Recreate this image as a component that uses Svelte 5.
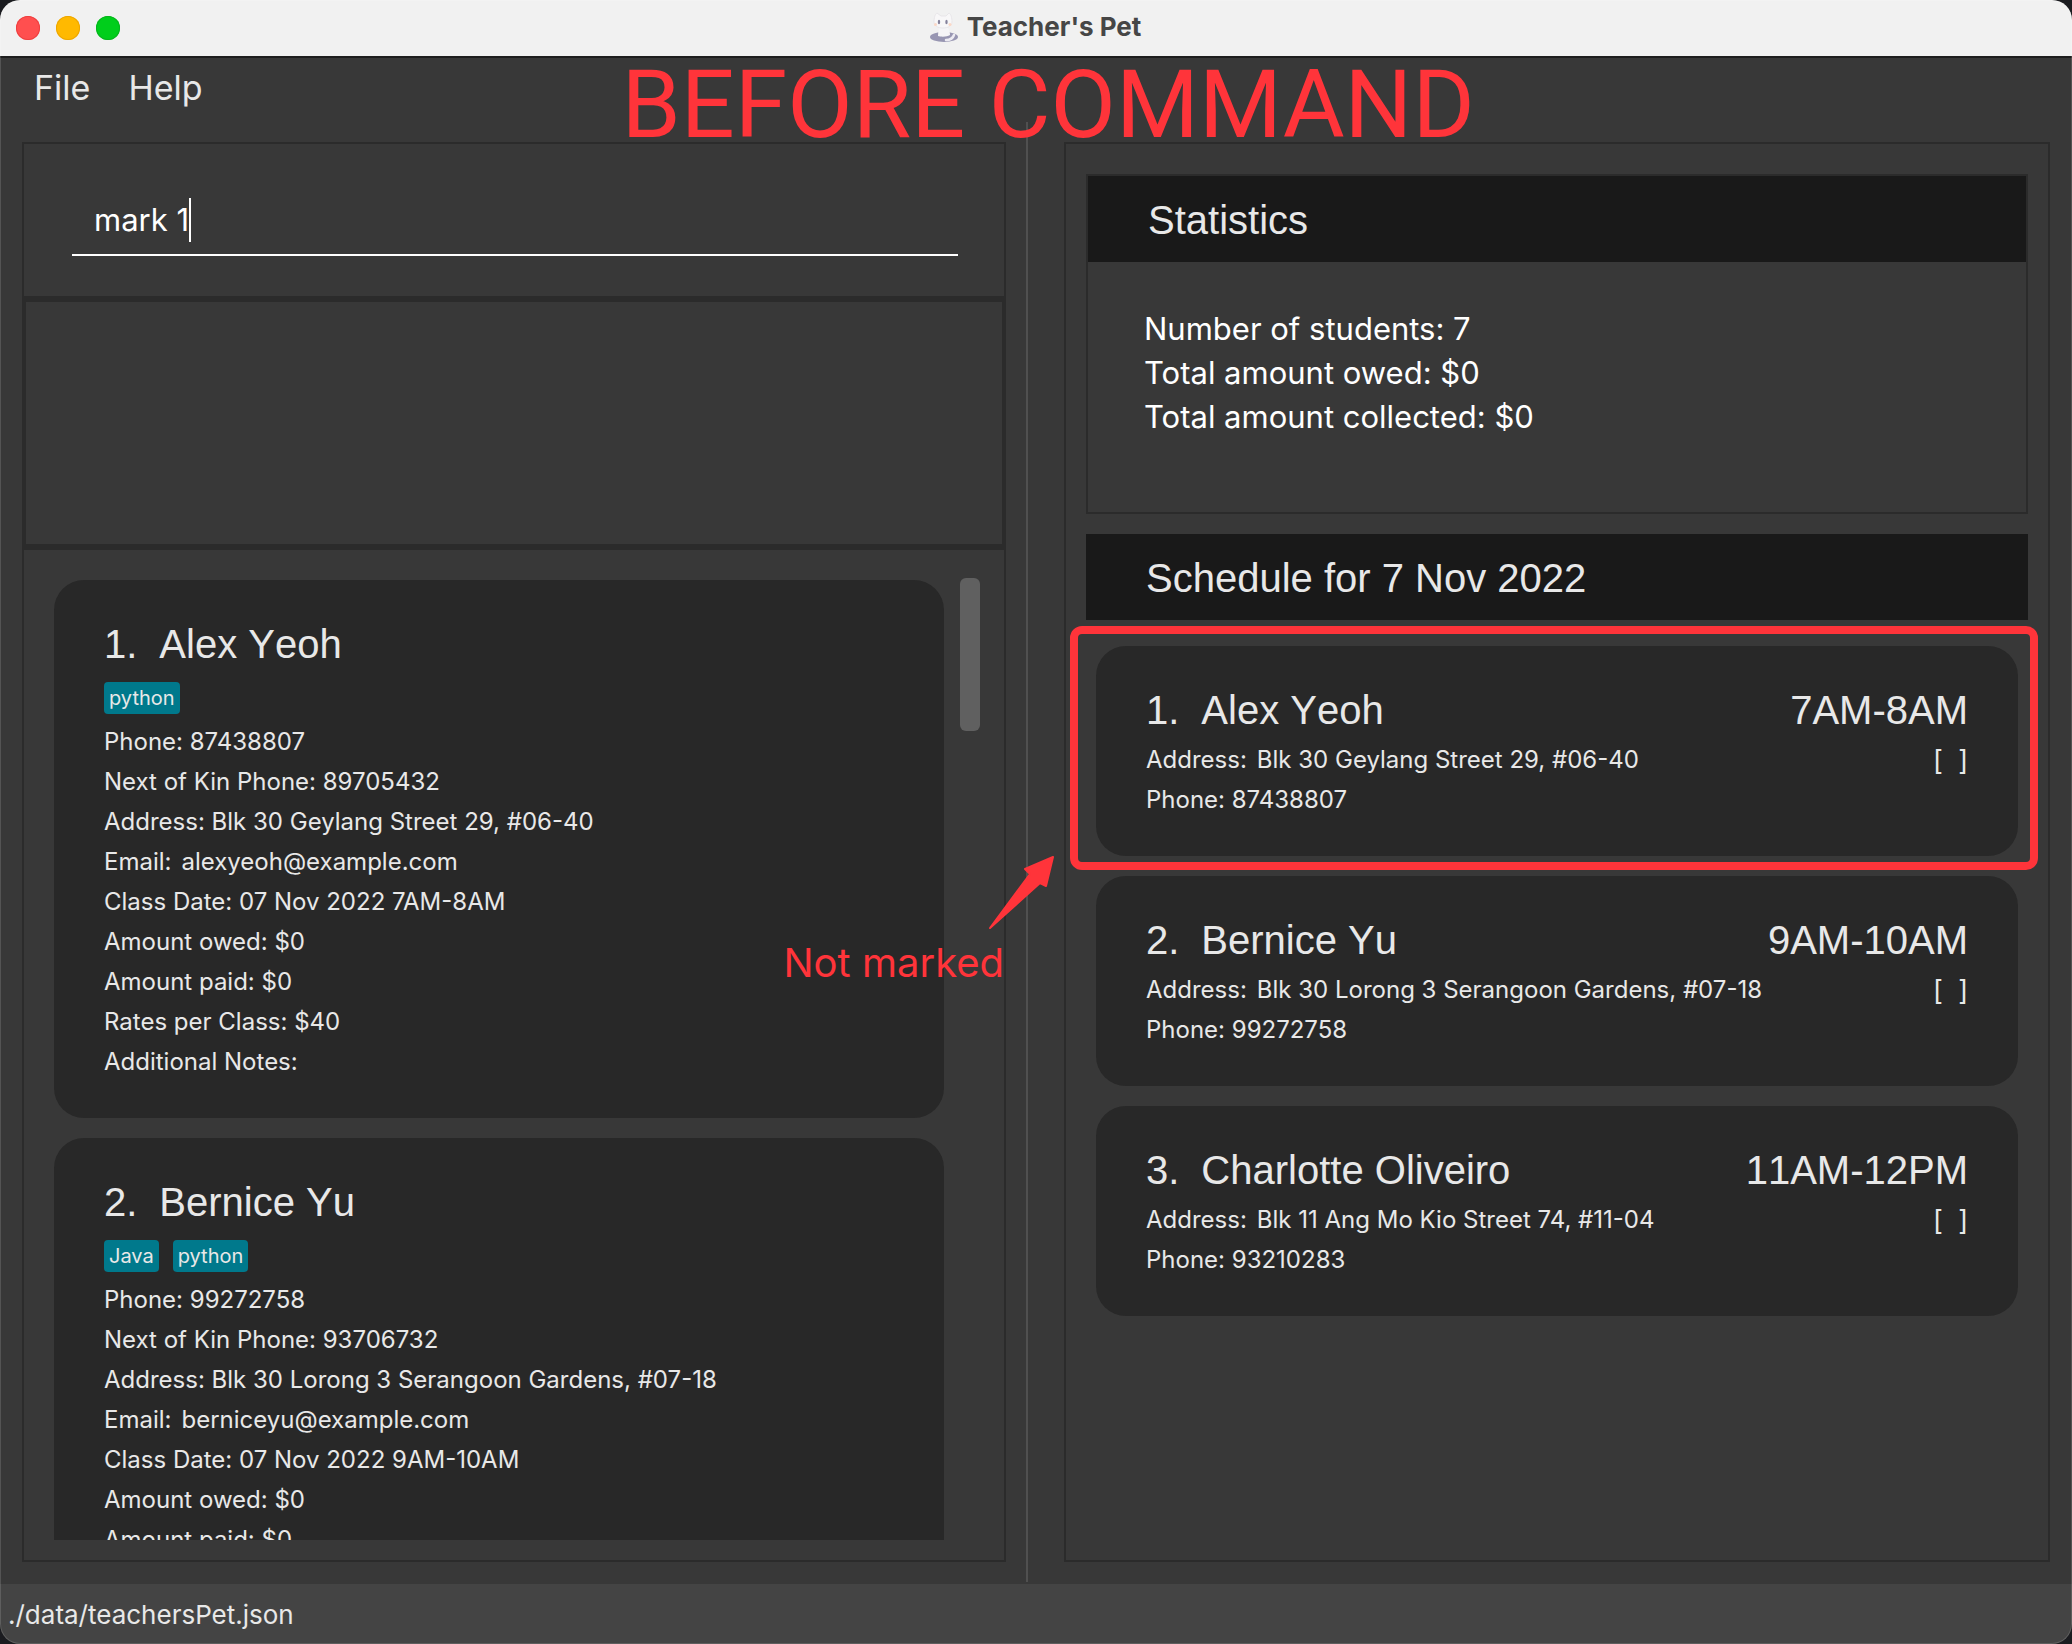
<script>
  let command = $state('mark 1');

  const students = [
    {
      name: 'Alex Yeoh',
      tags: ['python'],
      phone: '87438807',
      kin: '89705432',
      address: 'Blk 30 Geylang Street 29, #06-40',
      email: 'alexyeoh@example.com',
      classDate: '07 Nov 2022 7AM-8AM',
      time: '7AM-8AM'
    },
    {
      name: 'Bernice Yu',
      tags: ['Java', 'python'],
      phone: '99272758',
      kin: '93706732',
      address: 'Blk 30 Lorong 3 Serangoon Gardens, #07-18',
      email: 'berniceyu@example.com',
      classDate: '07 Nov 2022 9AM-10AM',
      time: '9AM-10AM'
    }
  ];

  const schedule = [
    ...students,
    {
      name: 'Charlotte Oliveiro',
      phone: '93210283',
      address: 'Blk 11 Ang Mo Kio Street 74, #11-04',
      time: '11AM-12PM'
    }
  ];
</script>

<div class="window">
  <header class="titlebar">
    <div class="lights">
      <button class="light close" aria-label="Close"></button>
      <button class="light minimise" aria-label="Minimise"></button>
      <button class="light zoom" aria-label="Zoom"></button>
    </div>
    <div class="title">
      <svg width="30" height="32" viewBox="0 0 30 32" aria-hidden="true">
        <ellipse cx="15" cy="26" rx="14" ry="5" fill="#9896b2" />
        <path d="M9 25c0-5 1-8 3-10h5c3 2 4 6 4 9-3 2-9 2-12 1z" fill="#f6f5f7" />
        <path d="M17 29c4 0 7-2 8-5" fill="none" stroke="#eceaf2" stroke-width="2.500" stroke-linecap="round" />
        <path d="M5 11C5 7 6 3 8 2l4 3h5l3-3c2 1 3 5 3 9 0 4-4 6-9 6s-9-2-9-6z" fill="#f8f7f8" stroke="#e4e2e6" stroke-width="0.8" />
        <ellipse cx="10" cy="11" rx="1.2" ry="2.200" fill="#85829b" />
        <ellipse cx="17.500" cy="11" rx="1.200" ry="2.200" fill="#85829b" />
        <circle cx="6.500" cy="13.500" r="1.500" fill="#fbd8c6" />
        <circle cx="21" cy="13.500" r="1.500" fill="#fbd8c6" />
      </svg>
      <span>Teacher's Pet</span>
    </div>
  </header>

  <nav class="menubar">
    <button>File</button>
    <button>Help</button>
    <div class="banner">BEFORE COMMAND</div>
  </nav>

  <main class="split">
    <section class="panel">
      <div class="command">
        <div class="command-field">
          <input type="text" aria-label="Command" bind:value={command} />
          <span class="caret"></span>
        </div>
      </div>
      <div class="result" role="status"></div>
      <div class="students">
        <div class="student-list">
          {#each students as s, i}
            <article class="card">
              <h2><span>{i + 1}.</span><span>{s.name}</span></h2>
              <div class="tags">
                {#each s.tags as tag}<span class="tag">{tag}</span>{/each}
              </div>
              <p>Phone: {s.phone}</p>
              <p>Next of Kin Phone: {s.kin}</p>
              <p>Address: {s.address}</p>
              <p class="pair"><span>Email:</span><span>{s.email}</span></p>
              <p>Class Date: {s.classDate}</p>
              <p>Amount owed: $0</p>
              <p>Amount paid: $0</p>
              <p>Rates per Class: $40</p>
              <p>Additional Notes:</p>
            </article>
          {/each}
        </div>
        <div class="thumb"></div>
      </div>
    </section>

    <div class="divider"></div>

    <section class="panel right">
      <div class="stats">
        <h1>Statistics</h1>
        <div class="stats-body">
          <p>Number of students: 7</p>
          <p>Total amount owed: $0</p>
          <p>Total amount collected: $0</p>
        </div>
      </div>
      <h1>Schedule for 7 Nov 2022</h1>
      <div class="schedule">
        {#each schedule as s, i}
          <article class="card slot">
            <div class="who">
              <h2><span>{i + 1}.</span><span>{s.name}</span></h2>
              <p class="pair"><span>Address:</span><span>{s.address}</span></p>
              <p>Phone: {s.phone}</p>
            </div>
            <div class="when">
              <h2>{s.time}</h2>
              <p class="mark">[&nbsp;&nbsp;]</p>
            </div>
            {#if i === 0}
              <div class="highlight"></div>
              <svg class="arrow" width="66" height="74" viewBox="0 0 66 74" aria-hidden="true">
                <path d="M1 72L41 18L36 13L64 1L57 30L51 27Z" fill="#ff343a" stroke="#ff343a" stroke-width="2" stroke-linejoin="round" />
              </svg>
              <div class="note">Not marked</div>
            {/if}
          </article>
        {/each}
      </div>
    </section>
  </main>

  <footer class="statusbar">./data/teachersPet.json</footer>
</div>

<style>
  :global(body) {
    margin: 0;
    background: #1b1c20;
  }
  .window {
    position: relative;
    box-sizing: border-box;
    height: 100vh;
    display: flex;
    flex-direction: column;
    overflow: hidden;
    border-radius: 20px;
    background: #383838;
    color: #e8e8e8;
    font-family: Inter, 'Liberation Sans', sans-serif;
    font-size: 24px;
    line-height: 40px;
  }
  .window::after {
    content: '';
    position: absolute;
    inset: 0;
    border-radius: 20px;
    box-shadow: inset 0 0 0 1px rgba(255, 255, 255, 0.14);
    pointer-events: none;
  }
  h1,
  h2,
  p {
    margin: 0;
    font-weight: 400;
  }
  h1,
  h2 {
    font-family: 'Liberation Sans', Arial, sans-serif;
    font-size: 40px;
    line-height: 40px;
    font-kerning: none;
  }
  button {
    border: 0;
    padding: 0;
    background: none;
    color: inherit;
    font: inherit;
  }

  .titlebar {
    display: grid;
    grid-template-columns: 1fr auto 1fr;
    align-items: center;
    height: 56px;
    flex: none;
    background: #f1f1f1;
    border-bottom: 2px solid #1e1e1e;
  }
  .lights {
    display: flex;
    gap: 16px;
    padding-left: 16px;
  }
  .light {
    width: 24px;
    height: 24px;
    border-radius: 50%;
  }
  .close {
    background: #ff4f4f;
    box-shadow: inset 0 0 0 1px #ee4040;
  }
  .minimise {
    background: #ffb900;
    box-shadow: inset 0 0 0 1px #eda600;
  }
  .zoom {
    background: #00ce1b;
    box-shadow: inset 0 0 0 1px #06b51c;
  }
  .title {
    display: flex;
    align-items: center;
    gap: 8px;
    padding: 0 2px 2px 0;
    color: #464646;
    font-weight: 700;
    font-size: 26px;
    line-height: 32px;
  }

  .menubar {
    position: relative;
    display: flex;
    align-items: flex-start;
    gap: 38px;
    height: 46px;
    flex: none;
    padding: 8px 34px;
    font-size: 34px;
    line-height: 44px;
  }
  .banner {
    position: absolute;
    top: 0;
    left: 30%;
    color: #ff343a;
    font-family: Roboto, 'Liberation Sans', sans-serif;
    font-size: 95px;
    line-height: 94px;
    white-space: nowrap;
    pointer-events: none;
  }

  .split {
    flex: 1;
    min-height: 0;
    display: grid;
    grid-template-columns: minmax(0, 492fr) auto minmax(0, 493fr);
    padding: 2px 22px;
  }
  .panel {
    box-sizing: border-box;
    min-width: 0;
    min-height: 0;
    margin: 20px 0;
    border: 2px solid #2b2b2b;
    display: flex;
    flex-direction: column;
  }
  .divider {
    width: 2px;
    margin: 0 36px 0 20px;
    background: #505050;
  }

  .command {
    padding: 46px 46px 40px 48px;
  }
  .command-field {
    display: flex;
    align-items: flex-start;
    height: 56px;
    padding: 8px 0 0 22px;
    border-bottom: 2px solid #fff;
  }
  input {
    field-sizing: content;
    border: 0;
    outline: 0;
    padding: 0;
    background: none;
    color: #fff;
    font: inherit;
    font-size: 31px;
    line-height: 44px;
  }
  .caret {
    width: 2px;
    height: 44px;
    background: #fff;
  }
  .result {
    height: 242px;
    flex: none;
    border: solid #2b2b2b;
    border-width: 6px 2px;
  }
  .students {
    flex: 1;
    min-height: 0;
    display: flex;
    align-items: stretch;
    gap: 16px;
    padding: 28px 24px 20px 30px;
  }
  .student-list {
    flex: 1;
    min-width: 0;
    margin-top: 2px;
    overflow-y: auto;
    scrollbar-width: none;
    display: flex;
    flex-direction: column;
    gap: 20px;
  }
  .thumb {
    width: 20px;
    height: 153px;
    border-radius: 6px;
    background: #606060;
  }

  .card {
    flex: none;
    padding: 44px 50px 36px;
    border-radius: 30px;
    background: #282828;
  }
  .card p {
    white-space: nowrap;
  }
  .card h2 {
    display: flex;
    gap: 22px;
    white-space: nowrap;
  }
  .tags {
    display: flex;
    gap: 14px;
    margin: 18px 0 8px;
  }
  .tag {
    padding: 0 5px;
    border-radius: 4px;
    background: #00798c;
    font-size: 20px;
    line-height: 32px;
  }
  .pair {
    display: flex;
    gap: 10px;
  }

  .right {
    padding: 30px 20px 0;
  }
  h1 {
    padding: 24px 60px 22px;
    background: #191919;
  }
  .stats {
    border: 2px solid #2b2b2b;
    margin-bottom: 20px;
  }
  .stats-body {
    padding: 45px 56px 73px;
    color: #fff;
    font-size: 31px;
    line-height: 44px;
  }
  .schedule {
    display: flex;
    flex-direction: column;
    gap: 20px;
    padding: 26px 10px 0;
  }
  .slot {
    position: relative;
    display: flex;
    justify-content: space-between;
  }
  .slot h2 {
    margin-bottom: 10px;
  }
  .when {
    text-align: right;
  }
  .mark {
    font-size: 27px;
    line-height: 42px;
  }
  .highlight {
    position: absolute;
    inset: -20px -20px -14px -26px;
    border: 8px solid #ff343a;
    border-radius: 12px;
    pointer-events: none;
  }
  .arrow {
    position: absolute;
    top: 210px;
    right: calc(100% + 41px);
  }
  .note {
    position: absolute;
    top: 293px;
    right: calc(100% + 92px);
    color: #ff343a;
    font-size: 40px;
    line-height: 48px;
    white-space: nowrap;
  }

  .statusbar {
    flex: none;
    height: 60px;
    padding-left: 8px;
    background: #444;
    font-size: 26px;
    line-height: 62px;
  }
</style>
